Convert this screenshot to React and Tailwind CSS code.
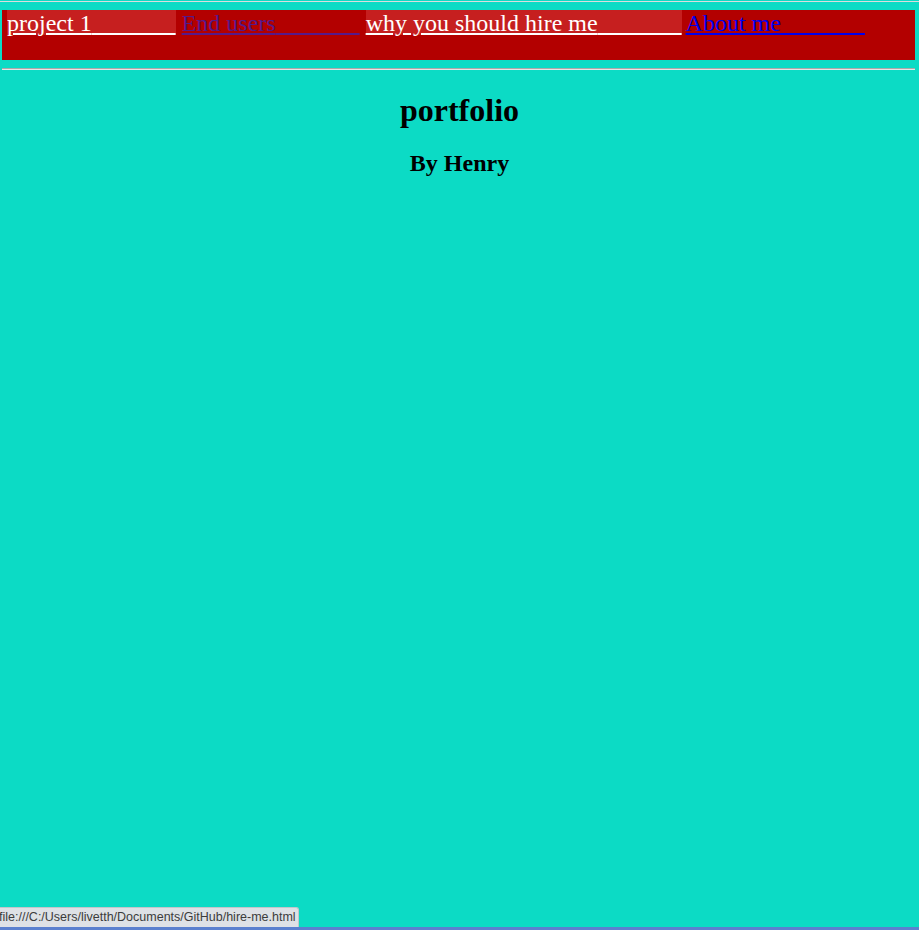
const pad = "\u00a0".repeat(14);

const links = [
  { label: "project 1", className: "bg-[#c61f1f] text-white" },
  { label: "End users", className: "text-[#551a8b]" },
  { label: "why you should hire me", className: "bg-[#c61f1f] text-white" },
  { label: "About me", className: "-ml-[2px] text-[#0000ee]" },
];

const App = () => {
  return (
    <main
      className="relative h-[930px] w-full overflow-hidden bg-[#0cdbc5] text-black"
      style={{ fontFamily: '"Liberation Serif", "Times New Roman", serif' }}
    >
      <div className="mt-[1px] h-px bg-[#dcdcdc]" />

      {/* nav bar */}
      <nav className="ml-[2px] mt-[8px] h-[50px] w-[913px] bg-[#b30000] pl-[5px] text-[24px] leading-[25px] whitespace-nowrap">
        {links.map((link, i) => (
          <span key={link.label}>
            <a href="#" className={`inline-block h-[25px] leading-[27px] underline ${link.className}`}>
              {link.label}
              {pad}
            </a>
            {i < links.length - 1 && " "}
          </span>
        ))}
      </nav>

      <hr className="ml-[2px] mt-[8px] w-[913px] border-t border-b border-t-[#a9a9a9] border-b-[#e6e6e6]" />

      <h1 className="mt-[22px] text-center text-[32px] font-bold leading-[37px]">
        portfolio
      </h1>
      <h2 className="mt-[20px] text-center text-[24px] font-bold leading-[28px]">
        By Henry
      </h2>

      {/* browser status bubble */}
      <div
        className="absolute bottom-[3px] left-0 flex h-[20px] w-[299px] items-center overflow-hidden whitespace-nowrap rounded-tr-[3px] border-t border-r border-[#c3c6cb] bg-[#dee1e6] text-[12.5px] text-[#3c3c3c]"
        style={{ fontFamily: '"Liberation Sans", Arial, sans-serif' }}
      >
        <span className="-ml-[1px]">file:///C:/Users/livetth/Documents/GitHub/hire-me.html</span>
      </div>
      <div className="absolute bottom-0 left-0 h-[3px] w-full bg-[#5b80cf]" />
    </main>
  );
};

export default App;
